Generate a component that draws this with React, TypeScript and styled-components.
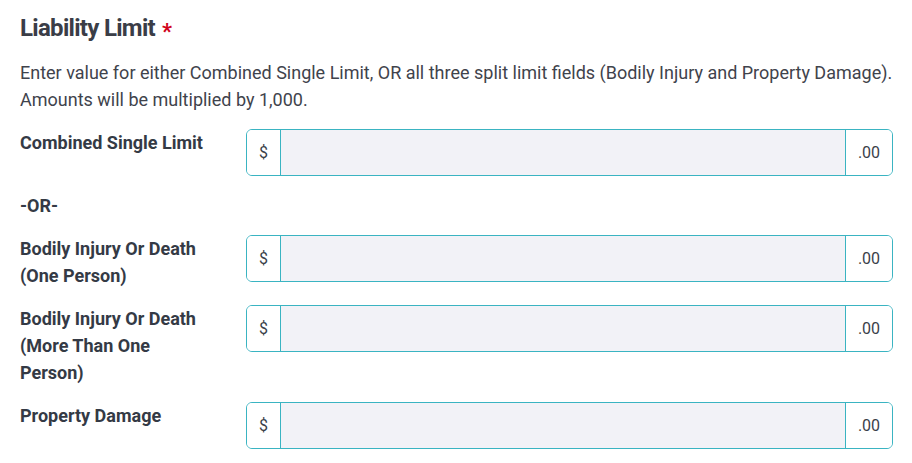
import React from "react";
import styled, { createGlobalStyle } from "styled-components";

const Global = createGlobalStyle`
  body {
    margin: 0;
    background: #ffffff;
    font-family: Roboto, "Liberation Sans", Arial, sans-serif;
    color: #343a45;
  }
`;

const Page = styled.div`
  padding: 12px 19px 0 20px;
`;

const Title = styled.h2`
  margin: 0;
  font-size: 24px;
  line-height: 32px;
  font-weight: 700;
  color: #3a3d47;
  letter-spacing: -0.7px;
  display: flex;
  align-items: center;
  gap: 7px;
`;

const Star = styled.span`
  color: #d0021b;
  font-size: 22px;
  line-height: 1;
  padding-top: 8px;
`;

const Description = styled.p`
  margin: 15px 0 16px;
  font-size: 18px;
  line-height: 27px;
  color: #3f434c;
`;

const Fields = styled.div`
  display: flex;
  flex-direction: column;
  gap: 16px;
`;

const Row = styled.div`
  display: grid;
  grid-template-columns: 186px 1fr;
  column-gap: 40px;
  align-items: start;
`;

const Label = styled.label`
  font-size: 18px;
  line-height: 27px;
  font-weight: 700;
  color: #343a45;
`;

const Separator = styled.div`
  font-size: 18px;
  line-height: 27px;
  font-weight: 700;
  color: #343a45;
`;

const InputGroup = styled.div`
  display: flex;
  height: 47px;
  border: 1px solid #3ab4c2;
  border-radius: 6px;
  overflow: hidden;
  box-sizing: border-box;
`;

const Addon = styled.span<{ $wide?: boolean }>`
  display: flex;
  align-items: center;
  justify-content: center;
  width: ${(p) => (p.$wide ? "46px" : "33px")};
  flex: none;
  background: #ffffff;
  font-size: 16px;
  color: #3a3f4a;
`;

const Field = styled.input`
  flex: 1;
  min-width: 0;
  border: none;
  border-left: 1px solid #3ab4c2;
  border-right: 1px solid #3ab4c2;
  background: #f2f2f7;
  outline: none;
  padding: 0 12px;
  font-size: 16px;
  font-family: inherit;
`;

const fields = [
  "Combined Single Limit",
  "-OR-",
  "Bodily Injury Or Death (One Person)",
  "Bodily Injury Or Death (More Than One Person)",
  "Property Damage",
];

export default function App() {
  return (
    <>
      <Global />
      <Page>
        <Title>
          Liability Limit <Star>*</Star>
        </Title>
        <Description>
          Enter value for either Combined Single Limit, OR all three split limit fields (Bodily Injury and Property
          Damage). Amounts will be multiplied by 1,000.
        </Description>
        <Fields>
          {fields.map((f) =>
            f === "-OR-" ? (
              <Separator key={f}>{f}</Separator>
            ) : (
              <Row key={f}>
                <Label>{f}</Label>
                <InputGroup>
                  <Addon>$</Addon>
                  <Field type="text" aria-label={f} />
                  <Addon $wide>.00</Addon>
                </InputGroup>
              </Row>
            )
          )}
        </Fields>
      </Page>
    </>
  );
}
